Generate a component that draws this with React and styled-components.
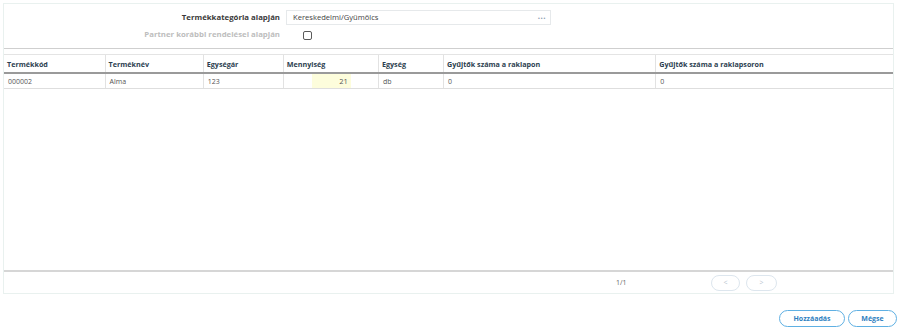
import React, { useState } from 'react';
import styled, { createGlobalStyle } from 'styled-components';

const GlobalStyle = createGlobalStyle`
  html, body {
    margin: 0;
    padding: 0;
    background: #fff;
    font-family: "Open Sans", "Liberation Sans", sans-serif;
  }
  * { box-sizing: border-box; }
`;

const Page = styled.div`
  width: 900px;
  height: 328px;
  padding: 3px 3px 0 3px;
  display: flex;
  flex-direction: column;
`;

const Panel = styled.div`
  width: 891px;
  height: 291px;
  border: 1px solid #e9f1ef;
  display: flex;
  flex-direction: column;
`;

const Filters = styled.div`
  height: 45px;
  border-bottom: 1px solid #cfcfcf;
  padding-top: 6px;
  display: flex;
  flex-direction: column;
  gap: 4px;
`;

const FormRow = styled.div`
  display: flex;
  align-items: center;
  gap: 6px;
  height: ${p => p.$h || 15}px;
  line-height: 1;
  font-size: 8px;
`;

const Label = styled.label`
  width: 276px;
  text-align: right;
  font-size: 7.8px;
  font-weight: 700;
  color: ${p => (p.$disabled ? '#bdbdbd' : '#3a3a3a')};
  white-space: nowrap;
`;

const Lookup = styled.div`
  width: 265px;
  height: 15px;
  border: 1px solid #e6e9eb;
  display: flex;
  align-items: center;
  justify-content: space-between;
  padding: 0 4px 0 6px;
  font-size: 7.6px;
  color: #444;
`;

const Dots = styled.span`
  color: #8a9cb0;
  font-weight: 700;
  letter-spacing: 0.5px;
  font-size: 8px;
  line-height: 1;
  margin-top: -3px;
`;

const CheckBox = styled.span`
  display: block;
  width: 9px;
  height: 9px;
  margin-left: 17px;
  border: 1px solid #5a5a5a;
  border-radius: 2px;
  background: #fff;
`;

const Grid = styled.div`
  margin-top: 5px;
  flex: 1;
  display: flex;
  flex-direction: column;
  border-top: 1px solid #e4e4e4;
`;

const Body = styled.div`
  flex: 1;
`;

const Table = styled.table`
  width: 100%;
  border-collapse: collapse;
  table-layout: fixed;
`;

const Th = styled.th`
  height: 18px;
  padding: 0 3px;
  text-align: left;
  font-size: 7.2px;
  font-weight: 700;
  color: #2c3e50;
  border-right: 1px solid #e2e2e2;
  border-bottom: 2px solid #9a9a9a;
  white-space: nowrap;
  &:last-child { border-right: none; }
`;

const Td = styled.td`
  height: 15px;
  padding: 0 4px;
  font-size: 7px;
  color: #555;
  border-right: 1px solid #e2e2e2;
  border-bottom: 1px solid #dedede;
  white-space: nowrap;
  &:last-child { border-right: none; }
`;

const QtyCell = styled(Td)`
  padding: 0;
`;

const QtyInput = styled.input`
  display: block;
  width: 39px;
  height: 14px;
  margin-left: 28px;
  border: none;
  outline: none;
  background: #fdfddc;
  text-align: right;
  padding: 0 3px;
  font-family: inherit;
  font-size: 7.5px;
  color: #555;
`;

const Footer = styled.div`
  height: 23px;
  border-top: 2px solid #d6d6d6;
  display: flex;
  align-items: center;
  padding-left: 612px;
`;

const PageInfo = styled.span`
  font-size: 7px;
  color: #666;
  width: 95px;
`;

const PagerButton = styled.button`
  width: ${p => p.$w}px;
  height: 16px;
  margin-right: 6px;
  border: 1px solid #dde6ee;
  border-radius: 8px;
  background: #fff;
  color: #b8c4cf;
  font-family: inherit;
  font-size: 7px;
  padding: 0;
`;

const Actions = styled.div`
  margin-top: 16px;
  display: flex;
  justify-content: flex-end;
  gap: 3px;
`;

const ActionButton = styled.button`
  width: ${p => p.$w}px;
  height: 17px;
  border: 1px solid #5fb0e3;
  border-radius: 9px;
  background: #fff;
  color: #2f7fbf;
  font-family: inherit;
  font-size: 7px;
  font-weight: 700;
  padding: 0;
`;

const columns = [
  { title: 'Termékkód', width: 101 },
  { title: 'Terméknév', width: 98 },
  { title: 'Egységár', width: 80 },
  { title: 'Mennyiség', width: 95 },
  { title: 'Egység', width: 65 },
  { title: 'Gyűjtők száma a raklapon', width: 212 },
  { title: 'Gyűjtők száma a raklapsoron', width: 237 },
];

const rows = [
  { code: '000002', name: 'Alma', price: '123', qty: '21', unit: 'db', perPallet: '0', perRow: '0' },
];

const App = () => {
  const [qty, setQty] = useState(rows.map(r => r.qty));

  return (
    <>
      <GlobalStyle />
      <Page>
        <Panel>
          <Filters>
            <FormRow>
              <Label>Termékkategória alapján</Label>
              <Lookup>
                <span>Kereskedelmi/Gyümölcs</span>
                <Dots>...</Dots>
              </Lookup>
            </FormRow>
            <FormRow $h={12}>
              <Label $disabled>Partner korábbi rendelései alapján</Label>
              <CheckBox />
            </FormRow>
          </Filters>

          <Grid>
            <Body>
              <Table>
                <colgroup>
                  {columns.map(c => <col key={c.title} style={{ width: c.width }} />)}
                </colgroup>
                <thead>
                  <tr>
                    {columns.map(c => <Th key={c.title}>{c.title}</Th>)}
                  </tr>
                </thead>
                <tbody>
                  {rows.map((r, i) => (
                    <tr key={r.code}>
                      <Td>{r.code}</Td>
                      <Td>{r.name}</Td>
                      <Td>{r.price}</Td>
                      <QtyCell>
                        <QtyInput
                          value={qty[i]}
                          onChange={e => setQty(qty.map((q, j) => (j === i ? e.target.value : q)))}
                        />
                      </QtyCell>
                      <Td>{r.unit}</Td>
                      <Td>{r.perPallet}</Td>
                      <Td>{r.perRow}</Td>
                    </tr>
                  ))}
                </tbody>
              </Table>
            </Body>
            <Footer>
              <PageInfo>1/1</PageInfo>
              <PagerButton $w={29}>&lt;</PagerButton>
              <PagerButton $w={31}>&gt;</PagerButton>
            </Footer>
          </Grid>
        </Panel>

        <Actions>
          <ActionButton $w={66}>Hozzáadás</ActionButton>
          <ActionButton $w={49}>Mégse</ActionButton>
        </Actions>
      </Page>
    </>
  );
};

export default App;
